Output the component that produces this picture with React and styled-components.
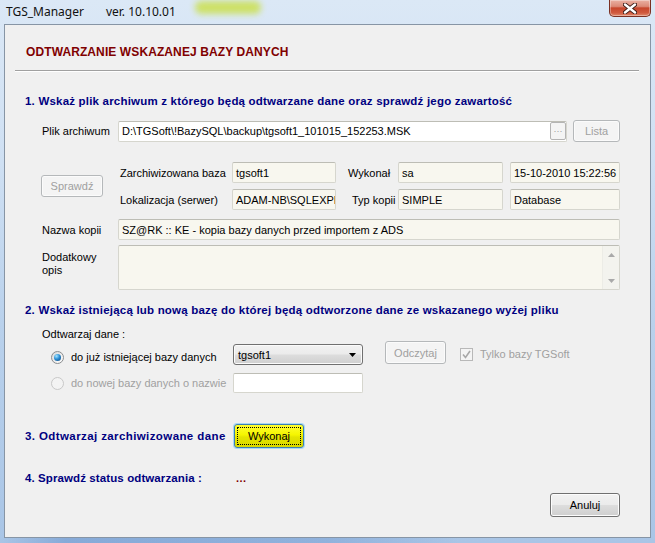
import React from 'react';
import styled, { createGlobalStyle } from 'styled-components';

const sans = `"Liberation Sans", Arial, sans-serif`;

const Global = createGlobalStyle`
  html, body { margin: 0; padding: 0; width: 655px; height: 543px; overflow: hidden; background: #c9dcf1; }
  #root { width: 655px; height: 543px; }
  * { box-sizing: border-box; }
`;

const Window = styled.div`
  width: 655px;
  height: 543px;
  display: flex;
  flex-direction: column;
  padding: 0 4px 5px 4px;
  background:
    linear-gradient(90deg, rgba(70,120,190,0) 0%, rgba(70,120,190,0.35) 10%, rgba(70,120,190,0.25) 50%, rgba(70,120,190,0) 70%) bottom / 100% 5px no-repeat,
    linear-gradient(180deg, #dbe8f6 0%, #cfe0f3 30%, #b9d1ec 60%, #a9c5e6 100%);
`;

const TitleBar = styled.div`
  height: 24px;
  display: flex;
  align-items: flex-start;
  font-family: "Noto Sans", "Open Sans", sans-serif;
  font-size: 12px;
  color: #111;
`;

const TitleText = styled.span`
  margin: 4px 0 0 ${p => p.$ml}px;
  line-height: 16px;
  white-space: nowrap;
`;

const Glow = styled.span`
  margin: 1px 0 0 19px;
  width: 66px;
  height: 13px;
  background: #cbe04e;
  border-radius: 6px;
  filter: blur(3px);
  opacity: 0.85;
`;

const CloseBtn = styled.div`
  margin-left: auto;
  width: 42px;
  height: 17px;
  border: 1px solid #7a3022;
  border-top: none;
  border-radius: 0 0 5px 5px;
  background: linear-gradient(180deg, #eab1a3 0%, #dc8a77 40%, #c7462c 50%, #d05a3e 80%, #e08a6c 100%);
  box-shadow: inset 0 0 0 1px rgba(255,255,255,0.35);
  display: flex;
  align-items: center;
  justify-content: center;
`;

const Client = styled.div`
  flex: 1;
  display: flex;
  flex-direction: column;
  border: 1px solid #8795a5;
  background: #f0f0f0;
  font-family: ${sans};
  font-size: 11px;
  color: #000;
`;

const Header = styled.div`
  margin: 19px 0 0 21px;
  font-family: ${sans};
  font-weight: bold;
  font-size: 12px;
  line-height: 16px;
  color: #800000;
  letter-spacing: 0.1px;
`;

const Separator = styled.div`
  margin: 10px 11px 0 10px;
  height: 2px;
  border-top: 1px solid #a0a0a0;
  border-bottom: 1px solid #ffffff;
`;

const SectionTitle = styled.div`
  margin-top: ${p => p.$top || 0}px;
  padding-left: 20px;
  width: ${p => (p.$w ? `${p.$w}px` : 'auto')};
  flex: none;
  font-family: ${sans};
  font-weight: bold;
  font-size: 11.5px;
  letter-spacing: ${p => p.$ls ?? 0.2}px;
  line-height: 16px;
  color: #000080;
  white-space: nowrap;
`;

const Row = styled.div`
  display: flex;
  align-items: ${p => p.$align || 'center'};
  margin-top: ${p => p.$top || 0}px;
  padding-left: ${p => p.$left || 0}px;
  padding-right: ${p => p.$right || 0}px;
  justify-content: ${p => p.$justify || 'flex-start'};
  height: ${p => (p.$h ? `${p.$h}px` : 'auto')};
`;

const Label = styled.span`
  width: ${p => p.$w}px;
  flex: none;
  line-height: ${p => p.$lh || 16}px;
  padding-top: ${p => p.$pt || 0}px;
  padding-left: ${p => p.$pl || 0}px;
  color: ${p => (p.$disabled ? '#a0a0a0' : '#000')};
  white-space: nowrap;
`;

const Field = styled.div`
  width: ${p => p.$w}px;
  height: ${p => p.$h || 21}px;
  flex: none;
  margin-left: ${p => p.$ml || 0}px;
  display: flex;
  align-items: ${p => (p.$multi ? 'stretch' : 'center')};
  padding-left: 3px;
  background: ${p => (p.$white ? '#ffffff' : '#f8f7ef')};
  border: 1px solid #d6d6ce;
  border-top-color: #bdbdb5;
  border-radius: 2px;
  white-space: nowrap;
  overflow: hidden;
  line-height: 16px;
`;

const FieldText = styled.span`
  flex: 1;
  min-width: 0;
  overflow: hidden;
  text-overflow: clip;
`;

const DotsBtn = styled.div`
  width: 16px;
  height: 18px;
  flex: none;
  border: 1px solid #b4b4b4;
  border-radius: 2px;
  background: #f4f4f4;
  color: #9a9a9a;
  font-size: 9px;
  line-height: 12px;
  display: flex;
  align-items: center;
  justify-content: center;
`;

const Button = styled.div`
  width: ${p => p.$w}px;
  height: ${p => p.$h || 22}px;
  flex: none;
  margin-left: ${p => p.$ml || 0}px;
  display: flex;
  align-items: center;
  justify-content: center;
  border-radius: 3px;
  line-height: 16px;
  ${p =>
    p.$disabled
      ? `border: 1px solid #b5b8ba; background: #f4f4f4; color: #a0a0a0; box-shadow: inset 0 0 0 1px #fbfbfb;`
      : `border: 1px solid #707070; color: #000; background: linear-gradient(180deg, #f2f2f2 0%, #ebebeb 48%, #dddddd 52%, #cfcfcf 100%); box-shadow: inset 0 0 0 1px #fcfcfc;`}
`;

const YellowButton = styled.div`
  width: 70px;
  height: 24px;
  flex: none;
  padding: 2px;
  border: 1px solid #3c7fb1;
  border-radius: 3px;
  background: linear-gradient(180deg, #ffff30 0%, #f5f500 45%, #e4e400 55%, #d8d800 100%);
  box-shadow: 0 0 0 1px #a8d8f4;
`;

const FocusRect = styled.div`
  height: 100%;
  border: 1px dotted #000;
  display: flex;
  align-items: center;
  justify-content: center;
  line-height: 16px;
`;

const InfoGrid = styled.div`
  margin-left: 17px;
  display: grid;
  grid-template-columns: 112px 104px 62px 105px 117px;
  grid-template-rows: 21px 21px;
  row-gap: 6px;
  align-items: center;
`;

const ScrollBar = styled.div`
  width: 17px;
  flex: none;
  margin-left: auto;
  border-left: 1px solid #ecece6;
  background: #f3f3ee;
  display: flex;
  flex-direction: column;
  justify-content: space-between;
  align-items: center;
  padding: 7px 0 6px;
`;

const Combo = styled.div`
  width: 130px;
  height: 21px;
  flex: none;
  margin-top: ${p => p.$mt || 0}px;
  display: flex;
  align-items: center;
  justify-content: space-between;
  padding: 0 6px 0 4px;
  border: 1px solid #707070;
  border-radius: 3px;
  background: linear-gradient(180deg, #f2f2f2 0%, #ebebeb 48%, #dddddd 52%, #cfcfcf 100%);
  box-shadow: inset 0 0 0 1px #fbfbfb;
  line-height: 16px;
`;

const RadioGroup = styled.div`
  width: 182px;
  flex: none;
  margin-top: ${p => p.$mt || 0}px;
  display: flex;
  align-items: center;
  gap: 7px;
`;

const RadioDot = styled.span`
  width: 13px;
  height: 13px;
  flex: none;
  border-radius: 50%;
  border: 1px solid ${p => (p.$disabled ? '#c8c8c8' : '#8b8d8f')};
  background: ${p => (p.$disabled ? '#f3f3f3' : 'linear-gradient(135deg, #d8d8d8, #ffffff)')};
  display: flex;
  align-items: center;
  justify-content: center;
  &::after {
    content: '';
    width: 7px;
    height: 7px;
    border-radius: 50%;
    background: radial-gradient(circle at 35% 30%, #a6e6ff 0%, #2b8fd6 45%, #0c3f73 100%);
    display: ${p => (p.$checked ? 'block' : 'none')};
  }
`;

const CheckGroup = styled.div`
  margin-left: 14px;
  margin-top: 5px;
  display: flex;
  align-items: center;
  gap: 7px;
  color: #a0a0a0;
  line-height: 16px;
`;

const CheckBox = styled.span`
  width: 13px;
  height: 13px;
  flex: none;
  border: 1px solid #b8b8b8;
  background: #f4f4f4;
  display: flex;
  align-items: center;
  justify-content: center;
`;

const Ellipsis = styled.span`
  color: #800000;
  font-weight: bold;
  line-height: 16px;
  letter-spacing: 0.5px;
`;

function Triangle({ down = true, color = '#000', w = 7, h = 4 }) {
  return (
    <svg width={w} height={h} viewBox={`0 0 ${w} ${h}`}>
      <polygon
        points={down ? `0,0 ${w},0 ${w / 2},${h}` : `0,${h} ${w},${h} ${w / 2},0`}
        fill={color}
      />
    </svg>
  );
}

export default function App() {
  return (
    <>
      <Global />
      <Window>
        <TitleBar>
          <TitleText $ml={2}>TGS_Manager</TitleText>
          <TitleText $ml={22}>ver. 10.10.01</TitleText>
          <Glow />
          <CloseBtn>
            <svg width="14" height="11" viewBox="0 0 14 11">
              <path d="M2 1.5 L12 9.5 M12 1.5 L2 9.5" stroke="#3a1a14" strokeWidth="4.2" strokeLinecap="round" />
              <path d="M2 1.5 L12 9.5 M12 1.5 L2 9.5" stroke="#ffffff" strokeWidth="2.4" strokeLinecap="round" />
            </svg>
          </CloseBtn>
        </TitleBar>
        <Client>
          <Header>ODTWARZANIE WSKAZANEJ BAZY DANYCH</Header>
          <Separator />

          <SectionTitle $top={21}>
            1. Wskaż plik archiwum z którego będą odtwarzane dane oraz sprawdź jego zawartość
          </SectionTitle>

          <Row $top={11} $left={37} $h={22}>
            <Label $w={76}>Plik archiwum</Label>
            <Field $w={449} $white>
              <FieldText>D:\TGSoft\!BazySQL\backup\tgsoft1_101015_152253.MSK</FieldText>
              <DotsBtn>···</DotsBtn>
            </Field>
            <Button $w={47} $ml={6} $disabled>Lista</Button>
          </Row>

          <Row $top={20} $left={36}>
            <Button $w={62} $disabled>Sprawdź</Button>
            <InfoGrid>
              <Label $w={112}>Zarchiwizowana baza</Label>
              <Field $w={104}>tgsoft1</Field>
              <Label $w={62} $pl={12}>Wykonał</Label>
              <Field $w={105}>sa</Field>
              <Field $w={110} $ml={7}>15-10-2010 15:22:56</Field>
              <Label $w={112}>Lokalizacja (serwer)</Label>
              <Field $w={104}>
                <FieldText>ADAM-NB\SQLEXPRESS</FieldText>
              </Field>
              <Label $w={62} $pl={16}>Typ kopii</Label>
              <Field $w={105}>SIMPLE</Field>
              <Field $w={110} $ml={7}>Database</Field>
            </InfoGrid>
          </Row>

          <Row $top={9} $left={37}>
            <Label $w={76}>Nazwa kopii</Label>
            <Field $w={502}>SZ@RK :: KE - kopia bazy danych przed importem z ADS</Field>
          </Row>

          <Row $top={5} $left={37} $align="flex-start">
            <Label $w={76} $lh={13} $pt={6}>
              Dodatkowy
              <br />
              opis
            </Label>
            <Field $w={502} $h={45} $multi>
              <ScrollBar>
                <Triangle down={false} color="#a9a9a9" />
                <Triangle color="#a9a9a9" />
              </ScrollBar>
            </Field>
          </Row>

          <SectionTitle $top={12}>
            2. Wskaż istniejącą lub nową bazę do której będą odtworzone dane ze wskazanego wyżej pliku
          </SectionTitle>

          <Row $top={9} $left={37}>
            <Label $w={120} $lh={14}>Odtwarzaj dane :</Label>
          </Row>

          <Row $left={46} $align="flex-start" $h={24}>
            <RadioGroup $mt={8}>
              <RadioDot $checked />
              <Label $w={160}>do już istniejącej bazy danych</Label>
            </RadioGroup>
            <Combo $mt={3}>
              <span>tgsoft1</span>
              <Triangle />
            </Combo>
            <Button $w={61} $h={23} $ml={22} $disabled>Odczytaj</Button>
            <CheckGroup>
              <CheckBox>
                <svg width="9" height="9" viewBox="0 0 9 9">
                  <path d="M1 4.5 L3.5 7.5 L8 1" fill="none" stroke="#a8a8a8" strokeWidth="1.6" />
                </svg>
              </CheckBox>
              <span>Tylko bazy TGSoft</span>
            </CheckGroup>
          </Row>

          <Row $top={8} $left={46} $h={20}>
            <RadioGroup>
              <RadioDot $disabled />
              <Label $w={160} $disabled>do nowej bazy danych o nazwie</Label>
            </RadioGroup>
            <Field $w={130} $h={20} $white />
          </Row>

          <Row $top={31} $h={24}>
            <SectionTitle $w={229} $ls={0.4}>3. Odtwarzaj zarchiwizowane dane</SectionTitle>
            <YellowButton>
              <FocusRect>Wykonaj</FocusRect>
            </YellowButton>
          </Row>

          <Row $top={22}>
            <SectionTitle $w={231} $ls={0.1}>4. Sprawdź status odtwarzania :</SectionTitle>
            <Ellipsis>...</Ellipsis>
          </Row>

          <Row $top={7} $right={30} $justify="flex-end">
            <Button $w={70} $h={24}>Anuluj</Button>
          </Row>
        </Client>
      </Window>
    </>
  );
}
